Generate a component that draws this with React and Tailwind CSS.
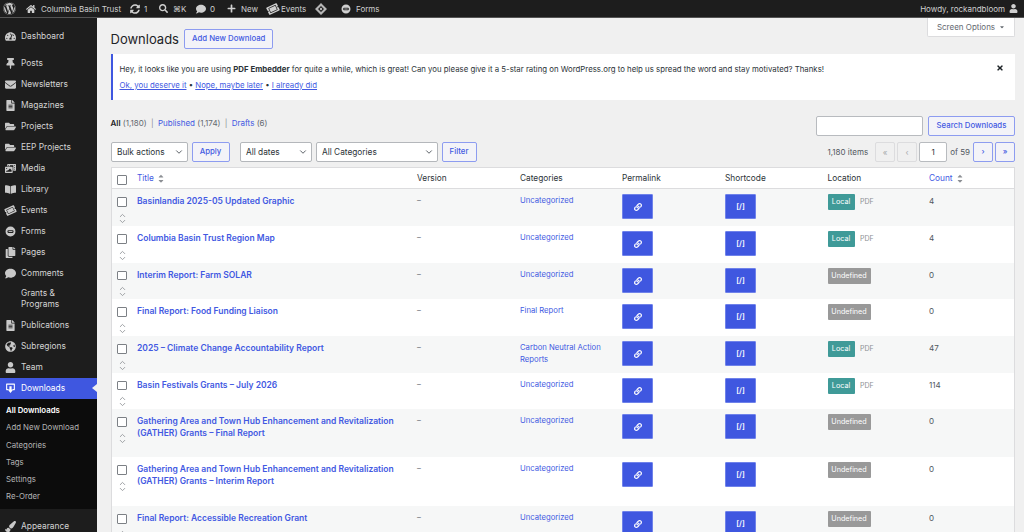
import React from 'react';
import { ChevronDown, ChevronUp } from 'lucide-react';
import {
  FaWordpress, FaHome, FaSyncAlt, FaSearch, FaComment, FaPlus, FaTicketAlt, FaTachometerAlt, FaThumbtack,
  FaEnvelope, FaFileAlt, FaFolderOpen, FaPhotoVideo, FaBookOpen, FaCopy, FaGlobeAmericas, FaUser, FaLink,
  FaPaintBrush, FaTimes, FaCaretDown, FaCaretUp,
} from 'react-icons/fa';

const BLUE = 'text-[#4259e2]';

const menuTop = [
  { label: 'Posts', icon: FaThumbtack },
  { label: 'Newsletters', icon: FaEnvelope },
  { label: 'Magazines', icon: FaFileAlt },
  { label: 'Projects', icon: FaFolderOpen },
  { label: 'EEP Projects', icon: FaFolderOpen },
  { label: 'Media', icon: FaPhotoVideo },
  { label: 'Library', icon: FaBookOpen },
  { label: 'Events', icon: TicketIcon },
  { label: 'Forms', icon: FormsIcon },
  { label: 'Pages', icon: FaCopy },
  { label: 'Comments', icon: FaComment },
  { label: 'Grants & Programs', icon: null },
  { label: 'Publications', icon: FaFileAlt },
  { label: 'Subregions', icon: FaGlobeAmericas },
  { label: 'Team', icon: FaUser },
];

const subMenu = ['Add New Download', 'Categories', 'Tags', 'Settings', 'Re-Order'];

const rows = [
  { title: 'Basinlandia 2025-05 Updated Graphic', cat: 'Uncategorized', loc: 'Local', count: '4', h: 'h-[37px]' },
  { title: 'Columbia Basin Trust Region Map', cat: 'Uncategorized', loc: 'Local', count: '4', h: 'h-[37px]' },
  { title: 'Interim Report: Farm SOLAR', cat: 'Uncategorized', loc: 'Undefined', count: '0', h: 'h-[36px]' },
  { title: 'Final Report: Food Funding Liaison', cat: 'Final Report', loc: 'Undefined', count: '0', h: 'h-[37px]' },
  { title: '2025 – Climate Change Accountability Report', cat: 'Carbon Neutral Action Reports', loc: 'Local', count: '47', h: 'h-[37px]' },
  { title: 'Basin Festivals Grants – July 2026', cat: 'Uncategorized', loc: 'Local', count: '114', h: 'h-[36px]' },
  { title: 'Gathering Area and Town Hub Enhancement and Revitalization (GATHER) Grants – Final Report', cat: 'Uncategorized', loc: 'Undefined', count: '0', h: 'h-[48px]' },
  { title: 'Gathering Area and Town Hub Enhancement and Revitalization (GATHER) Grants – Interim Report', cat: 'Uncategorized', loc: 'Undefined', count: '0', h: 'h-[49px]' },
  { title: 'Final Report: Accessible Recreation Grant', cat: 'Uncategorized', loc: 'Undefined', count: '0', h: 'h-[37px]' },
];

function TicketIcon({ className }) {
  return <FaTicketAlt className={`${className} -rotate-[25deg]`} />;
}

function FormsIcon({ className }) {
  return (
    <svg viewBox="0 0 20 20" className={className} fill="currentColor">
      <path fillRule="evenodd" d="M10 1a9 9 0 1 1 0 18a9 9 0 0 1 0-18zM6 7.5a1.5 1.5 0 0 0-1.5 1.5v2A1.5 1.5 0 0 0 6 12.5h8a1.5 1.5 0 0 0 1.5-1.5V9A1.5 1.5 0 0 0 14 7.5z" />
      <rect x="6.5" y="9.2" width="7" height="1.6" />
    </svg>
  );
}

function DownloadIcon({ className }) {
  return (
    <svg viewBox="0 0 20 20" className={className} fill="currentColor">
      <path d="M3 1h14a1 1 0 0 1 1 1v10a1 1 0 0 1-1 1h-3v-2h2V3H4v8h2v2H3a1 1 0 0 1-1-1V2a1 1 0 0 1 1-1z" />
      <path d="M8 6h4v6h3l-5 6l-5-6h3z" />
    </svg>
  );
}

function DiamondIcon() {
  return (
    <svg viewBox="0 0 20 20" className="w-[12px] h-[12px] text-[#b5b5b5]" fill="currentColor">
      <path fillRule="evenodd" d="M10 0l10 10l-10 10L0 10zM10 5l-5 5l5 5l5-5z" />
      <circle cx="10" cy="10" r="2" />
    </svg>
  );
}

function SortArrows() {
  return (
    <span className="inline-flex flex-col text-[#8c8f94] ml-[3px]">
      <FaCaretUp className="w-[8px] h-[8px] -mb-[3.5px]" />
      <FaCaretDown className="w-[8px] h-[8px]" />
    </span>
  );
}

function Checkbox() {
  return <span className="block w-[10px] h-[10px] rounded-[1px] border border-[#7c8085] bg-white" />;
}

function AdminBar() {
  return (
    <div className="h-[18px] bg-[#1d1d1d] flex items-center text-[#cfcfcf] text-[8px] pl-[3px] pr-[6px] shrink-0 border-b border-[#555]">
      <FaWordpress className="w-[13px] h-[13px] mr-[10px] text-[#c8c8c8]" />
      <FaHome className="w-[10px] h-[10px] mr-[5px]" />
      <span className="w-[78px] mr-[11px] whitespace-nowrap">Columbia Basin Trust</span>
      <FaSyncAlt className="w-[10px] h-[10px] mr-[4px]" />
      <span className="w-[4px] mr-[11px]">1</span>
      <FaSearch className="w-[9px] h-[9px] mr-[5px]" />
      <span className="w-[12px] mr-[11px]">⌘K</span>
      <FaComment className="w-[10px] h-[10px] mr-[4px]" />
      <span className="w-[5px] mr-[12px]">0</span>
      <FaPlus className="w-[9px] h-[9px] mr-[5px]" />
      <span className="w-[16px] mr-[10px]">New</span>
      <TicketIcon className="w-[12px] h-[12px] mr-[2px]" />
      <span className="w-[24px] mr-[10px]">Events</span>
      <DiamondIcon />
      <FormsIcon className="w-[10px] h-[10px] ml-[14px] mr-[5px]" />
      <span>Forms</span>
      <span className="ml-auto mr-[4px]">Howdy, rockandbloom</span>
      <FaUser className="w-[9px] h-[9px]" />
    </div>
  );
}

function MenuItem({ label, icon: Icon }) {
  const two = label.includes('&');
  return (
    <div className={`flex items-center shrink-0 pl-[4px] text-[#d3d3d3] ${two ? 'h-[31px]' : 'h-[21px]'}`}>
      <span className="w-[17px] flex justify-start pl-[1px]">
        {Icon && <Icon className="w-[11px] h-[11px] text-[#c8c8c8]" />}
      </span>
      <span className={`${two ? 'w-[60px] leading-[11px]' : ''}`}>{label}</span>
    </div>
  );
}

function Sidebar() {
  return (
    <div className="w-[97px] shrink-0 bg-[#1d1d1d] text-[8.4px] flex flex-col pt-[7.5px] overflow-hidden">
      <MenuItem label="Dashboard" icon={FaTachometerAlt} />
      <div className="h-[6px] shrink-0" />
      {menuTop.map((m) => <MenuItem key={m.label} {...m} />)}
      <div className="relative shrink-0 h-[21px] bg-[#3f57e0] flex items-center pl-[4px] text-white">
        <span className="w-[17px] pl-[1px]"><DownloadIcon className="w-[11px] h-[11px]" /></span>
        Downloads
        <span className="absolute right-0 top-[6px] border-y-[4px] border-y-transparent border-r-[5px] border-r-[#f0f0f0]" />
      </div>
      <div className="bg-[#0c0c0c] shrink-0 pt-[4px] pb-[3px] text-[7.8px] text-[#b4b4b4] pl-[6px]">
        <div className="h-[17.2px] flex items-center text-white font-semibold">All Downloads</div>
        {subMenu.map((s) => <div key={s} className="h-[17.2px] flex items-center">{s}</div>)}
      </div>
      <div className="mt-[7px] shrink-0"><MenuItem label="Appearance" icon={FaPaintBrush} /></div>
    </div>
  );
}

function Notice() {
  return (
    <div className="relative h-[46px] mt-[5px] mr-[9px] bg-white border-l-[2.5px] border-[#3f57e0] pl-[7px] pt-[9px] text-[7.82px] text-[#2c3338]">
      <p className="leading-[12px]">
        Hey, it looks like you are using <b>PDF Embedder</b> for quite a while, which is great! Can you please give it a 5-star rating on WordPress.org to help us spread the word and stay motivated? Thanks!
      </p>
      <p className={`leading-[12px] mt-[4px] ${BLUE}`}>
        <span className="underline">Ok, you deserve it</span>
        <span className="text-[#2c3338]"> • </span>
        <span className="underline">Nope, maybe later</span>
        <span className="text-[#2c3338]"> • </span>
        <span className="underline">I already did</span>
      </p>
      <FaTimes className="absolute right-[11px] top-[10px] w-[8px] h-[8px] text-[#1d2327]" />
    </div>
  );
}

function Outline({ className = '', children }) {
  return (
    <span className={`flex items-center justify-center h-[20px] border border-[#8d9cf0] bg-[#f3f3f8] rounded-[2px] text-[7.8px] font-medium ${BLUE} ${className}`}>
      {children}
    </span>
  );
}

function Select({ className = '', children }) {
  return (
    <span className={`flex items-center justify-between h-[20px] pl-[5.5px] pr-[3px] border border-[#b4b7bb] bg-white rounded-[2px] text-[#2c3338] text-[8.3px] ${className}`}>
      {children}
      <ChevronDown size={10} strokeWidth={2} className="text-[#3c434a]" />
    </span>
  );
}

function Toolbar() {
  return (
    <div className="mr-[9px]">
      <div className="flex items-start h-[24px] text-[8px] mt-[12px]">
        <p className="text-[#646970] pt-[5px]">
          <b className="text-[#1d2327] font-semibold">All</b> (1,180) <span className="mx-[2px] text-[#8c8f94]">|</span>{' '}
          <span className={BLUE}>Published</span> (1,174) <span className="mx-[2px] text-[#8c8f94]">|</span>{' '}
          <span className={BLUE}>Drafts</span> (6)
        </p>
        <span className="ml-auto mt-[4px] w-[107px] h-[20px] bg-white border border-[#b8bbbf] rounded-[2px]" />
        <Outline className="w-[87px] ml-[5px] mt-[4px]">Search Downloads</Outline>
      </div>
      <div className="flex items-center h-[20px] mt-[6px] text-[8px]">
        <Select className="w-[77px]">Bulk actions</Select>
        <Outline className="w-[38px] ml-[4px]">Apply</Outline>
        <Select className="w-[72px] ml-[10px]">All dates</Select>
        <Select className="w-[122px] ml-[4px]">All Categories</Select>
        <Outline className="w-[35px] ml-[4px]">Filter</Outline>
        <span className="ml-auto text-[#50575e] mr-[7px]">1,180 items</span>
        <span className="flex items-center justify-center w-[20px] h-[20px] border border-[#dcdcde] rounded-[2px] text-[#a7aaad] mr-[2px]">«</span>
        <span className="flex items-center justify-center w-[20px] h-[20px] border border-[#dcdcde] rounded-[2px] text-[#a7aaad] mr-[2px]">‹</span>
        <span className="flex items-center justify-center w-[28px] h-[20px] border border-[#b8bbbf] bg-white rounded-[2px] text-[#2c3338]">1</span>
        <span className="text-[#50575e] ml-[3px] mr-[3px]">of 59</span>
        <Outline className="w-[20px] mr-[2px]">›</Outline>
        <Outline className="w-[20px]">»</Outline>
      </div>
    </div>
  );
}

function Badge({ loc }) {
  const local = loc === 'Local';
  return (
    <span className="flex items-center">
      <span className={`h-[16px] flex items-center justify-center rounded-[1px] text-white text-[7.2px] ${local ? 'w-[27px] bg-[#3f9a98]' : 'w-[43px] bg-[#999999]'}`}>{loc}</span>
      {local && <span className="ml-[5.5px] text-[#8c8f94] text-[7px]">PDF</span>}
    </span>
  );
}

function ActionButton({ children }) {
  return (
    <span className="flex items-center justify-center w-[31px] h-[25px] bg-[#3f57e0] border border-[#6f82ea] rounded-[1px] text-white">
      {children}
    </span>
  );
}

function Row({ row, index }) {
  return (
    <div className={`flex ${row.h} text-[7.7px] ${index % 2 === 0 ? 'bg-[#f6f7f7]' : 'bg-white'}`}>
      <div className="w-[25.5px] shrink-0 flex flex-col items-start pl-[5.5px] pt-[8px]">
        <Checkbox />
        <span className="mt-[4px] ml-[0.5px] flex flex-col text-[#9a9da0]">
          <ChevronUp size={9} strokeWidth={2.5} className="-mb-[3px]" />
          <ChevronDown size={9} strokeWidth={2.5} />
        </span>
      </div>
      <div className={`w-[280px] shrink-0 pt-[5.5px] pr-[14px] font-semibold leading-[12px] text-[8.5px] ${BLUE}`}>{row.title}</div>
      <div className="w-[103px] shrink-0 pt-[5.5px] text-[#646970] leading-[12px]">–</div>
      <div className={`w-[102px] shrink-0 pt-[5.5px] pr-[10px] leading-[12px] ${BLUE}`}>{row.cat}</div>
      <div className="w-[103px] shrink-0 pt-[5px]"><ActionButton><FaLink className="w-[8px] h-[8px]" /></ActionButton></div>
      <div className="w-[102.5px] shrink-0 pt-[5px]"><ActionButton><span className="text-[7.5px] font-semibold">[/]</span></ActionButton></div>
      <div className="w-[101.5px] shrink-0 pt-[5px]"><Badge loc={row.loc} /></div>
      <div className="pt-[5.5px] text-[#50575e] text-[8px] leading-[12px]">{row.count}</div>
    </div>
  );
}

function ListTable() {
  return (
    <div className="mr-[9px] mt-[5px] bg-white border border-[#dcdcde] overflow-hidden">
      <div className="flex items-center h-[21px] pt-[1px] text-[8.3px] text-[#2c3338] border-b border-[#dcdcde]">
        <div className="w-[25.5px] shrink-0 pl-[5.5px] pt-[2px]"><Checkbox /></div>
        <div className={`w-[280px] shrink-0 flex items-center ${BLUE}`}>Title<SortArrows /></div>
        <div className="w-[103px] shrink-0">Version</div>
        <div className="w-[102px] shrink-0">Categories</div>
        <div className="w-[103px] shrink-0">Permalink</div>
        <div className="w-[102.5px] shrink-0">Shortcode</div>
        <div className="w-[101.5px] shrink-0">Location</div>
        <div className={`flex items-center ${BLUE}`}>Count<SortArrows /></div>
      </div>
      {rows.map((r, i) => <Row key={r.title} row={r} index={i} />)}
    </div>
  );
}

export default function App() {
  return (
    <div className="w-[1024px] h-[532px] overflow-hidden flex flex-col bg-[#f0f0f0] font-['Inter',sans-serif]">
      <AdminBar />
      <div className="flex flex-1 min-h-0">
        <Sidebar />
        <main className="relative flex-1 pl-[13.5px] min-w-0">
          <div className="absolute right-[9px] top-0 w-[88px] h-[19px] bg-white border border-t-0 border-[#dcdcde] rounded-b-[2px] flex items-center justify-center text-[8px] text-[#646970]">
            Screen Options <FaCaretDown className="w-[6px] h-[6px] ml-[4px]" />
          </div>
          <div className="flex items-center h-[20px] mt-[11px]">
            <h1 className="text-[13px] text-[#1d2327] leading-none">Downloads</h1>
            <Outline className="w-[89.5px] ml-[5px]">Add New Download</Outline>
          </div>
          <Notice />
          <Toolbar />
          <ListTable />
        </main>
      </div>
    </div>
  );
}
